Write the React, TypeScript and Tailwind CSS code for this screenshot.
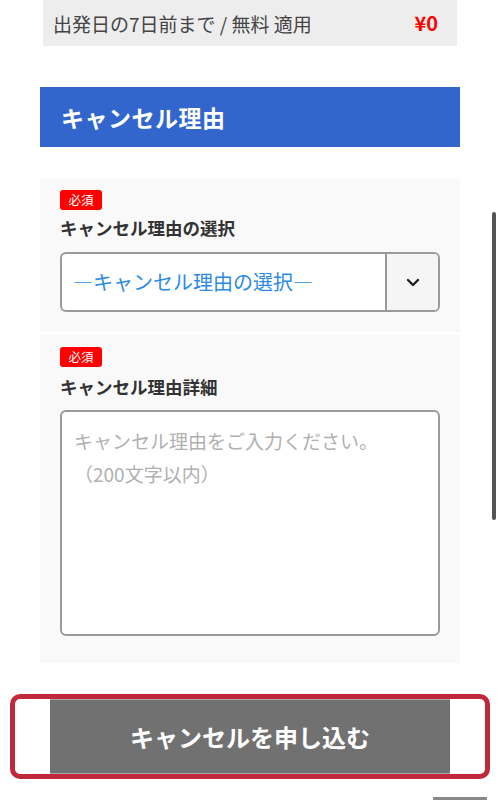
import React from "react";

const Required = () => (
  <div className="flex h-[20px] w-[42px] items-center justify-center rounded-[3px] bg-[#ff0000] text-[12.5px] leading-none text-white">
    必須
  </div>
);

const ChevronDown = () => (
  <svg width="14" height="9" viewBox="0 0 14 9" fill="none">
    <path d="M2 2l5 5 5-5" stroke="#222" strokeWidth="2.4" strokeLinecap="round" strokeLinejoin="round" />
  </svg>
);

const App = () => {
  return (
    <div className="relative h-[800px] w-[500px] overflow-hidden bg-white font-['Noto_Sans_CJK_JP',sans-serif] text-[#333]">
      <div className="px-[40px]">
        {/* fee row */}
        <div className="mx-[3px] flex h-[46px] items-center justify-between bg-[#ededed] pl-[10px] pr-[19px]">
          <span className="text-[19px] leading-none text-[#444]">出発日の7日前まで / 無料 適用</span>
          <span className="text-[20px] font-bold leading-none text-[#ff0000]">¥0</span>
        </div>

        {/* section title */}
        <div className="mt-[41px] flex h-[60px] items-center bg-[#3366cc] pl-[21px]">
          <h2 className="text-[23px] font-bold leading-none tracking-[0.5px] text-white">キャンセル理由</h2>
        </div>

        {/* reason select */}
        <div className="mt-[32px] bg-[#f9f9f9] px-[20px] pb-[20px] pt-[11px]">
          <Required />
          <div className="mt-[5px] text-[17.5px] font-bold leading-[26px] text-[#333]">キャンセル理由の選択</div>
          <div className="mt-[11px] flex h-[60px] overflow-hidden rounded-[6px] border-2 border-[#9a9a9a] bg-white">
            <div className="flex flex-1 items-center pl-[11px] text-[20px] leading-none text-[#2b8be4]">―キャンセル理由の選択―</div>
            <div className="flex w-[53px] items-center justify-center border-l-2 border-[#9a9a9a] bg-[#f5f5f5]">
              <ChevronDown />
            </div>
          </div>
        </div>

        {/* reason detail */}
        <div className="mt-[3px] bg-[#f9f9f9] px-[20px] pb-[27px] pt-[12px]">
          <Required />
          <div className="mt-[7px] text-[17.5px] font-bold leading-[26px] text-[#333]">キャンセル理由詳細</div>
          <div className="mt-[10px] h-[226px] rounded-[6px] border-2 border-[#9a9a9a] bg-white px-[12px] pt-[12px] text-[19px] leading-[33px] text-[#b0b0b0]">
            キャンセル理由をご入力ください。
            <br />
            （200文字以内）
          </div>
        </div>
      </div>

      {/* submit */}
      <div className="mx-[10px] mt-[31px] flex h-[85px] justify-center rounded-[10px] border-[5px] border-[#c0283c]">
        <button className="flex h-[75px] w-[400px] items-center justify-center border-y border-[#a8a8a8] bg-[#717171] text-[24px] font-bold leading-none text-white">
          キャンセルを申し込む
        </button>
      </div>

      <div className="ml-[433px] mt-[18px] h-[3px] w-[54px] bg-[#8a8a8a]" />

      {/* scrollbar */}
      <div className="absolute left-[492px] top-[212px] h-[308px] w-[4px] rounded-full bg-[#555]" />
    </div>
  );
};

export default App;
